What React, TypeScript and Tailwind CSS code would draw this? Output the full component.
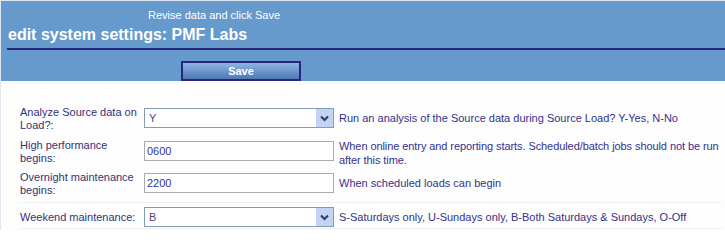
import React from 'react';

const font = { fontFamily: '"Liberation Sans", Arial, sans-serif' };

function Chevron() {
  return (
    <svg width="9" height="7" viewBox="0 0 9 7">
      <path d="M1 1.5l3.5 3.5 3.5-3.5" fill="none" stroke="#2b3f6b" strokeWidth="2" />
    </svg>
  );
}

function SelectBox({ value }: { value: string }) {
  return (
    <div className="flex h-[20px] w-[190px] shrink-0 items-stretch border border-[#7f9db9] bg-white">
      <div className="flex-1 pl-[4px] text-[11px] leading-[18px] text-[#5a3a8a]">{value}</div>
      <div className="flex w-[17px] items-center justify-center bg-[#c3d3f4]">
        <Chevron />
      </div>
    </div>
  );
}

function TextBox({ value }: { value: string }) {
  return (
    <div className="h-[20px] w-[190px] shrink-0 border border-[#a5acb2] bg-white pl-[2px] text-[11px] leading-[18px] text-[#333399]">
      {value}
    </div>
  );
}

export default function App() {
  return (
    <div
      className="h-[230px] w-[725px] overflow-hidden whitespace-nowrap border-l border-t border-[#dfe6ef] bg-[#fdfdfd] text-[11px] leading-[13px] text-[#333377]"
      style={font}
    >
      {/* header */}
      <div className="h-[80px] bg-[#6699cc]">
        <div className="pl-[147px] pt-[8px] text-[11px] leading-[13px] text-white">Revise data and click Save</div>
        <div className="ml-[6px] mt-[3px] border-b-2 border-[#26267a] pb-[4px] pl-[1px] text-[16px] font-bold leading-[19px] text-white">
          edit system settings: PMF Labs
        </div>
        <div className="pl-[180px] pt-[11px]">
          <button className="h-[20px] w-[120px] border-2 border-[#26267a] bg-gradient-to-b from-[#8fb4e4] via-[#6c96cd] to-[#4d78b3] text-[11px] font-bold leading-[16px] text-white">
            Save
          </button>
        </div>
      </div>

      {/* form rows */}
      <div className="pl-[19px] pr-[4px] pt-[25px]">
        {/* row 1 */}
        <div className="flex h-[33px] items-start">
          <div className="w-[124px] shrink-0">
            <div>Analyze Source data on</div>
            <div>Load?:</div>
          </div>
          <div className="mt-[2px]">
            <SelectBox value="Y" />
          </div>
          <div className="mt-[2px] flex h-[20px] items-center pl-[5px] text-[#33338a]">
            Run an analysis of the Source data during Source Load? Y-Yes, N-No
          </div>
        </div>

        {/* row 2 */}
        <div className="flex h-[32px] items-start">
          <div className="w-[124px] shrink-0">
            <div>High performance</div>
            <div>begins:</div>
          </div>
          <div className="mt-[2px]">
            <TextBox value="0600" />
          </div>
          <div className="pl-[5px] leading-[14px] tracking-[-0.08px] text-[#33338a]">
            <div>When online entry and reporting starts. Scheduled/batch jobs should not be run</div>
            <div>after this time.</div>
          </div>
        </div>

        {/* row 3 */}
        <div className="flex h-[32px] items-start border-b border-dotted border-[#e2e2e2]">
          <div className="w-[124px] shrink-0">
            <div>Overnight maintenance</div>
            <div>begins:</div>
          </div>
          <div className="mt-[2px]">
            <TextBox value="2200" />
          </div>
          <div className="mt-[2px] flex h-[20px] items-center pl-[5px] text-[#33338a]">When scheduled loads can begin</div>
        </div>

        {/* row 4 */}
        <div className="flex h-[26px] items-start border-b border-dotted border-[#e2e2e2] pt-[4px]">
          <div className="flex h-[20px] w-[124px] shrink-0 items-center">Weekend maintenance:</div>
          <SelectBox value="B" />
          <div className="flex h-[20px] items-center pl-[5px] text-[#33338a]">
            S-Saturdays only, U-Sundays only, B-Both Saturdays &amp; Sundays, O-Off
          </div>
        </div>
      </div>
    </div>
  );
}
